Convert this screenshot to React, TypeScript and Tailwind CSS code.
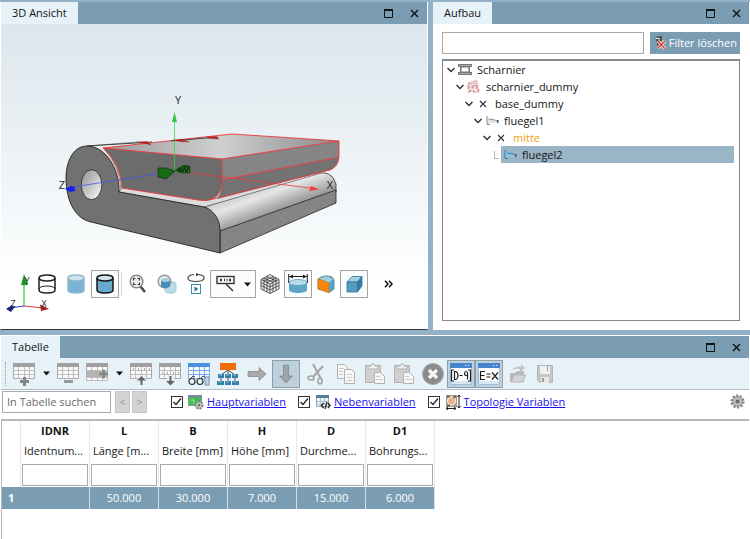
import { useState } from 'react'
import type { ReactNode } from 'react'

type TreeNode = {
    name: string
    icon: ReactNode
    indent: string
    color?: string
    selected?: boolean
}

const columns = [
    { id: 'IDNR', label: 'Identnum...', value: '' },
    { id: 'L', label: 'Länge [m...', value: '50.000' },
    { id: 'B', label: 'Breite [mm]', value: '30.000' },
    { id: 'H', label: 'Höhe [mm]', value: '7.000' },
    { id: 'D', label: 'Durchme...', value: '15.000' },
    { id: 'D1', label: 'Bohrungs...', value: '6.000' },
]

const PanelHeader = ({ title }: { title: string }) => (
    <div className="flex h-[22px] shrink-0 items-stretch bg-[#7b9db3]">
        <h2 className="flex items-center bg-[#e6f1f8] px-[11px]">{title}</h2>
        <div className="ml-auto flex items-center gap-[17px] pr-2">
            <button aria-label="Maximieren">
                <svg width="9" height="9" viewBox="0 0 9 9" fill="none" stroke="#111">
                    <path d="M.5 1v7.5h8V1" />
                    <path d="M0 1h9" strokeWidth="2" />
                </svg>
            </button>
            <button aria-label="Schließen">
                <svg width="9" height="9" viewBox="0 0 9 9" stroke="#111" strokeWidth="1.4">
                    <path d="M1 1l7 7M8 1L1 8" />
                </svg>
            </button>
        </div>
    </div>
)

const Model = () => (
    <svg className="absolute inset-0 h-full w-full" viewBox="1 24 426 305" strokeLinejoin="round">
        <defs>
            <linearGradient id="top" x1="0" y1="0" x2="1" y2="0">
                <stop offset="0" stopColor="#9a9a9a" />
                <stop offset=".5" stopColor="#d0d0d0" />
                <stop offset="1" stopColor="#898989" />
            </linearGradient>
            <linearGradient id="round" x1="250" y1="188" x2="262" y2="220" gradientUnits="userSpaceOnUse">
                <stop offset="0" stopColor="#c9c9c9" />
                <stop offset=".35" stopColor="#e6e6e6" />
                <stop offset="1" stopColor="#8b8b8b" />
            </linearGradient>
            <linearGradient id="hole" x1="0" y1="0" x2="1" y2="1">
                <stop offset="0" stopColor="#8e8e8e" />
                <stop offset="1" stopColor="#fdfdfd" />
            </linearGradient>
            <pattern id="grain" width="8" height="8" patternUnits="userSpaceOnUse">
                <rect width="8" height="8" fill="#858585" />
                <path d="M1 1.500h1M5 5.500h1" stroke="#a98a70" />
                <path d="M5 1.500h1M1 5.500h1" stroke="#757c99" />
            </pattern>
        </defs>
        {/* lower wing */}
        <path d="M204 207L315 174Q332 169 336 184V192L220 232Q217 213 204 207Z" fill="url(#round)" stroke="#333" strokeWidth=".8" />
        <path d="M220 231L336 190V203L220 253Z" fill="url(#grain)" stroke="#222" strokeWidth=".8" />
        <path d="M119 192L122 187 205 199 325 168 318 174 204 207Z" fill="#dcdcdc" stroke="#444" strokeWidth=".5" />
        <path d="M87 146L138 142 145 145 105 150Q119 165 121 189L119 192Z" fill="#ededed" stroke="#555" strokeWidth=".6" />
        <path
            d="M87 146C73 146 66 162 66 178C66 202 76 219 91 222L220 253V229C219 217 212 209 204 207L119 192V187C117 163 103 146 87 146Z"
            fill="#717171"
            stroke="#222"
            strokeWidth=".9"
        />
        <ellipse cx="91.500" cy="184.700" rx="10.300" ry="15" fill="url(#hole)" stroke="#222" strokeWidth=".8" />
        {/* upper wing */}
        <path d="M103 148L232 134 339 141 222 159Z" fill="url(#top)" />
        <path d="M103 148L222 159V184Q220 199 205 201L122 188Q120 163 103 148Z" fill="#6c6c6c" />
        <path d="M222 159L339 141V157L222 180Z" fill="url(#grain)" />
        <path d="M222 180L339 157Q338 167 330 170L217 199Q222 193 222 180Z" fill="#737373" />
        <g fill="none" stroke="#f03434" strokeWidth=".9">
            <path d="M103 148L232 134 339 141V157Q338 167 330 170L209 200Q205 201 198 200L122 188Q120 163 103 148L222 159 339 141" />
            <path d="M222 159V184Q221 197 209 200M222 180L339 157" />
        </g>
        <path d="M87 146L152 142M171 141L218 137" stroke="#333" strokeWidth=".9" />
        <g fill="#d31e1e" stroke="#5c1717" strokeWidth=".3">
            <path d="M137 142L147 141.500 151 145 143 143Z" />
            <path d="M173 140L183 139.500 189 142 180 141.500Z" />
            <path d="M207 137L216 136.500 219 139 210 138.500Z" />
        </g>
        {/* axes */}
        <path d="M175 171L310 188" stroke="#e23b3b" strokeWidth=".8" />
        <path d="M319 189.500L309 191 311 186Z" fill="#f23a3a" />
        <path d="M175 171L73 187" stroke="#4058ef" strokeWidth=".8" />
        <path d="M65 189L71 186 75 187 75 191 70 192Z" fill="#1322f0" />
        <path d="M174.500 171V119" stroke="#3bd04b" strokeWidth="1" strokeDasharray="2 .6" />
        <path d="M174.500 112L177 122H172Z" fill="#36c345" />
        <path d="M158 168H166L175 171 166 179 158 177Z" fill="#176b17" stroke="#122a12" strokeWidth=".7" />
        <path d="M175 170L184 165 190 166V173L180 173Z" fill="#143c14" stroke="#1b701b" strokeWidth=".6" />
        <path d="M182 168h1M186 168h1M184 171h1M188 171h1" stroke="#5abc64" strokeWidth="1" />
        <g fill="#26262b" fontSize="11" textAnchor="middle">
            <text x="178" y="104">Y</text>
            <text x="62" y="189">Z</text>
            <text x="330" y="189">X</text>
        </g>
        {/* orientation triad */}
        <path d="M24 306V284" stroke="#35d138" strokeWidth="1.300" />
        <path d="M24 274L28 285H21Z" fill="#1d9624" />
        <path d="M24 306L43 308" stroke="#e13333" strokeWidth="1" />
        <path d="M49 309L40 304.500 41 311Z" fill="#a31f1f" />
        <path d="M24 306L10 308" stroke="#2e3ef0" strokeWidth="1" />
        <path d="M6 309L12 305 14 308 11 312Z" fill="#1c2474" />
        <g fill="#26262b" fontSize="9" textAnchor="middle">
            <text x="27" y="284">Y</text>
            <text x="13" y="307">Z</text>
            <text x="44" y="307">X</text>
        </g>
    </svg>
)

const Cylinder = ({ fill, stroke, back }: { fill: string; stroke: string; back?: boolean }) => (
    <svg width="20" height="22" viewBox="0 0 20 22" fill={fill} stroke={stroke} strokeWidth="1.500">
        {back && <path d="M2 16c0-4 16-4 16 0" fill="none" strokeWidth="1" />}
        <path d="M2 5v12c0 4 16 4 16 0V5" />
        <ellipse cx="10" cy="5" rx="8" ry="3" fill={back ? 'none' : '#cfe6f1'} />
    </svg>
)

const ViewButton = ({ label, active, wide, children }: { label: string; active?: boolean; wide?: boolean; children: ReactNode }) => (
    <button
        aria-label={label}
        className={`flex h-7 shrink-0 items-center justify-center ${wide ? 'w-[46px] gap-2' : 'w-7'} ${
            active ? 'border border-[#a4a4a4] bg-[#fbfdfd]' : ''
        }`}
    >
        {children}
    </button>
)

const Caret = () => (
    <svg width="7" height="5" viewBox="0 0 7 5">
        <path d="M0 .5h7L3.500 4.500z" fill="#111" />
    </svg>
)

const ViewToolbar = () => (
    <div className="absolute bottom-[31px] left-8 flex items-center">
        <div className="flex gap-px">
            <ViewButton label="Drahtmodell">
                <Cylinder fill="none" stroke="#222" back />
            </ViewButton>
            <ViewButton label="Schattiert">
                <Cylinder fill="#79b2d2" stroke="#91b9ce" />
            </ViewButton>
            <ViewButton label="Schattiert mit Kanten" active>
                <Cylinder fill="#68a9cd" stroke="#151515" />
            </ViewButton>
        </div>
        <div className="mx-[2px] h-6 w-px bg-[#d2d8db]" />
        <div className="flex gap-px">
            <ViewButton label="Alles einpassen">
                <svg width="18" height="20" viewBox="0 0 18 20" fill="none">
                    <path d="M11 12l5 6" stroke="#444" strokeWidth="2.600" />
                    <circle cx="7.500" cy="7.500" r="6.300" fill="#f0f0f0" stroke="#858585" strokeWidth="1.500" />
                    <path d="M4.500 6.500v-2h2M8.500 4.500h2v2M10.500 8.500v2h-2M6.500 10.500h-2v-2" stroke="#333" strokeWidth="1.200" />
                </svg>
            </ViewButton>
            <ViewButton label="Auswahl zoomen">
                <svg width="20" height="20" viewBox="0 0 20 20">
                    <path d="M8 9v8c0 3 11 3 11 0V9q-5-3-11 0" fill="#b9dbea" stroke="#a1cbdc" />
                    <circle cx="7.500" cy="7.500" r="6.300" fill="#eee" stroke="#999" strokeWidth="1.500" />
                    <path d="M4 6v6c2 3 7 3 9 0V6" fill="#438fb9" />
                    <ellipse cx="8.500" cy="6" rx="4.500" ry="2" fill="#a3cbdd" />
                </svg>
            </ViewButton>
            <ViewButton label="Animation">
                <svg width="20" height="22" viewBox="0 0 20 22" fill="none">
                    <path d="M12 1.500c9 .5 8 7-2 7S-1 2.500 8 1.500" stroke="#444" strokeWidth="1.200" />
                    <path d="M10 0l3 1.500-3 2z" fill="#333" />
                    <rect x="5.500" y="11.500" width="9" height="9" fill="#fff" stroke="#438ab0" />
                    <path d="M8.500 13.500v5l4-2.500z" fill="#28739b" />
                </svg>
            </ViewButton>
        </div>
        <ViewButton label="Beschriftung" active wide>
            <svg width="20" height="18" viewBox="0 0 20 18" fill="none" stroke="#333">
                <rect x="1" y="1.500" width="17" height="7" strokeWidth="1.400" fill="#fff" />
                <path d="M4 5h2M8 5h1M10.500 5h1M13 5h2" strokeWidth="2.600" />
                <path d="M10 9l7 7" strokeWidth="1.400" />
            </svg>
            <Caret />
        </ViewButton>
        <ViewButton label="Gitter">
            <svg width="20" height="20" viewBox="0 0 20 20" stroke="#333" strokeWidth=".8" fill="#f3f3f3">
                <path d="M1 5.500l9-5 9 5v9.500l-9 4.500L1 15z" />
                <path
                    d="M1 5.500l9 4.500 9-4.500M10 10v9.500M4 4v12.500M7 2.500V18M13 2.500V18M16 4v12.500M1 8.500l9 4.500 9-4.500M1 11.500l9 4.500 9-4.500M4 4l9 4.500M7 2.500L16 7M13 2.500L4 7M16 4L7 8.500"
                    fill="none"
                />
            </svg>
        </ViewButton>
        <ViewButton label="Bemaßung" active>
            <svg width="20" height="20" viewBox="0 0 20 20">
                <path d="M1 8v8c0 4 18 4 18 0V8" fill="#5fa5c9" />
                <ellipse cx="10" cy="8.500" rx="9" ry="3" fill="#b8dcec" stroke="#569abd" strokeWidth=".8" />
                <path d="M.7 0v9M19.300 0v9M1 2.500h18" stroke="#222" fill="none" />
                <path d="M1 2.500L5 .5v4zM19 2.500L15 .5v4z" fill="#222" />
            </svg>
        </ViewButton>
        <ViewButton label="Schnitt">
            <svg width="18" height="19" viewBox="0 0 18 19">
                <path d="M1 4Q7-1 15 2l2 3v9l-4 3L1 14z" fill="#5fa3c5" stroke="#447d9b" strokeWidth=".8" />
                <path d="M2 4Q9-1 16 4l-4 4z" fill="#a2ceda" />
                <path d="M1 3.500l11 4.500v10L1 14z" fill="#fb8508" stroke="#a9792f" strokeWidth=".6" />
            </svg>
        </ViewButton>
        <ViewButton label="Perspektive" active>
            <svg width="17" height="18" viewBox="0 0 17 18" stroke="#31739a" strokeWidth=".8">
                <path d="M1 7l5-5.500h10L11.500 7z" fill="#a4cee0" />
                <path d="M1 7h10.500v10H1z" fill="#569bc1" />
                <path d="M11.500 7L16 1.500V11l-4.500 6z" fill="#347ba8" />
            </svg>
        </ViewButton>
        <button aria-label="Weitere" className="ml-4">
            <svg width="9" height="8" viewBox="0 0 9 8" fill="none" stroke="#111" strokeWidth="1.500">
                <path d="M1 .7L4 4 1 7.300M5 .7L8 4 5 7.300" />
            </svg>
        </button>
    </div>
)

const CrossIcon = () => (
    <svg width="14" height="14" viewBox="0 0 14 14" stroke="#333" strokeWidth="1.100">
        <path d="M4 4l6 6M10 4l-6 6" />
    </svg>
)

const WingIcon = ({ blue }: { blue?: boolean }) => (
    <svg width="14" height="14" viewBox="0 0 14 14">
        <path d="M1 3l3 1v1l8 1.500v2L4 9l1 1.500H2V5z" fill={blue ? '#8dc5e4' : '#e2e5e6'} />
        <path d="M1 3h2M2 4v6M2 10.500h3M4 5l8 1.500" stroke={blue ? '#2c80ad' : '#8c8c8c'} fill="none" />
        <path d="M12 6h1.500v3H12z" fill="#4c535a" />
    </svg>
)

const AssemblyIcon = () => (
    <svg width="14" height="14" viewBox="0 0 14 14" fill="#777">
        <path d="M0 1h14v3h-2v5h2v3H0V9h2V4H0z" />
        <path d="M3.500 4.500h7v4h-7z" fill="#fff" />
        <path d="M1 2.500h12M1 10.500h12" stroke="#aaa" />
    </svg>
)

const NoPartIcon = () => (
    <svg width="14" height="14" viewBox="0 0 14 14" fill="none" stroke="#d98484" strokeWidth=".9">
        <path d="M2 5V2l3 3V1M7 1h3v3H7zM1 9V6h2v2H1M5 9V6h2v1H5l2 2M9 6h3M9 6v3h3M9 7.500h2M2 13v-3h2v1H2M6 13l1-3 1 3M10 10h3M11.500 10v3" />
        <path d="M1 13l5-3M8 12l4-1M5 6l6-1M0 7l3-5" stroke="#c0a8a8" />
    </svg>
)

const nodes: TreeNode[] = [
    { name: 'Scharnier', icon: <AssemblyIcon />, indent: 'pl-[3px]' },
    { name: 'scharnier_dummy', icon: <NoPartIcon />, indent: 'pl-[12px]' },
    { name: 'base_dummy', icon: <CrossIcon />, indent: 'pl-[21px]' },
    { name: 'fluegel1', icon: <WingIcon />, indent: 'pl-[30px]' },
    { name: 'mitte', icon: <CrossIcon />, indent: 'pl-[39px]', color: 'text-[#f2a20d]' },
    { name: 'fluegel2', icon: <WingIcon blue />, indent: 'pl-[48px]', selected: true },
]

const Tree = () => (
    <ul className="mx-[9px] mt-[5px] mb-[9px] flex-1 border border-t-2 border-[#85898d] pr-[5px]">
        {nodes.map((node) => (
            <li key={node.name} className={`flex h-[17px] items-center ${node.indent}`}>
                <span className="flex w-[10px] shrink-0 justify-center">
                    {node.selected ? (
                        <svg width="5" height="8" viewBox="0 0 5 8" fill="none" stroke="#b5b5b5">
                            <path d="M.5 0v7.500H5" />
                        </svg>
                    ) : (
                        <svg width="8" height="6" viewBox="0 0 8 6" fill="none" stroke="#333" strokeWidth="1.500">
                            <path d="M.5 1L4 4.500 7.500 1" />
                        </svg>
                    )}
                </span>
                <span
                    className={`flex h-full items-center gap-[5px] pl-[2px] ${node.selected ? 'flex-1 bg-[#9ab5c6]' : ''} ${node.color ?? ''}`}
                >
                    {node.icon}
                    {node.name}
                </span>
            </li>
        ))}
    </ul>
)

const Grid = ({ children, blue }: { children?: ReactNode; blue?: boolean }) => (
    <svg width="22" height="24" viewBox="0 0 22 24">
        <path d="M.5 2.500h21v14H.5z" fill="#fafafa" stroke={blue ? '#83abd8' : '#a9a9a9'} />
        <path d="M0 1h22v4H0z" fill={blue ? '#4a91e6' : '#a0a0a0'} />
        <path d="M1 8.500h20M1 12.500h20M5.500 5v12M11.500 5v12M16.500 5v12" stroke={blue ? '#75aaf0' : '#bdbdbd'} />
        {children}
    </svg>
)

const Tool = ({ label, active, children }: { label: string; active?: boolean; children: ReactNode }) => (
    <button
        aria-label={label}
        className={`flex h-7 w-7 shrink-0 items-center justify-center ${active ? 'border border-[#8f9fa8] bg-[#bdd1dd]' : ''}`}
    >
        {children}
    </button>
)

const DropTool = ({ label }: { label: string }) => (
    <button aria-label={label} className="flex h-7 w-[14px] items-center justify-center">
        <Caret />
    </button>
)

const Clipboard = () => (
    <svg width="22" height="24" viewBox="0 0 22 24" stroke="#b2b2b2">
        <path d="M1.500 3.500h15v17h-15z" fill="#d0d0d0" />
        <path d="M4 7h10V4h-3Q9-1 7 4H4z" fill="#eee" />
        <path d="M10.500 10.500h6l4 4v7h-10z" fill="#f7f7f7" />
        <path d="M12 14.500h4M12 17.500h7" stroke="#ccc" />
    </svg>
)

const WindowBox = ({ children }: { children: ReactNode }) => (
    <svg width="22" height="24" viewBox="0 0 22 24" fill="none">
        <path d="M.5 1.500h21v21H.5z" fill="#fff" stroke="#a3bcdc" />
        <path d="M0 1h22v5H0z" fill="#4784ce" />
        <path d="M15 3.500h1M18 3.500h1" stroke="#fff" />
        <path d="M1 19h20v3H1z" fill="#d5e6f5" />
        <g stroke="#1d1d1d" strokeWidth="1.200">
            {children}
        </g>
    </svg>
)

const TableToolbar = () => (
    <div className="flex h-8 shrink-0 items-center border-b border-[#adbcc7] bg-[#e6f1f8] pl-1">
        <div className="mr-1 h-6 w-px border-l border-dotted border-[#8d9ba4]" />
        <div className="flex gap-px">
            <Tool label="Zeile einfügen">
                <Grid>
                    <path d="M11.500 15v9M7 19.500h9" stroke="#858585" strokeWidth="3" />
                </Grid>
            </Tool>
            <DropTool label="Einfügeoptionen" />
            <Tool label="Zeile löschen">
                <Grid>
                    <path d="M7 19.500h9" stroke="#999" strokeWidth="3" />
                </Grid>
            </Tool>
            <Tool label="Zeile duplizieren">
                <Grid>
                    <path d="M0 9h22v6H0z" fill="#b3b3b3" />
                    <path d="M.5 15.500h21v3H.5z" fill="#fafafa" stroke="#bbb" />
                    <path d="M5.500 15v4M11.500 15v4M16.500 15v4" stroke="#bbb" />
                    <path d="M17.500 7.500v9M13 12h9" stroke="#858585" strokeWidth="2.500" />
                </Grid>
            </Tool>
            <DropTool label="Duplizieroptionen" />
            <Tool label="Zeile nach oben">
                <Grid>
                    <path d="M8 13h7v11H8z" fill="#e6f1f8" />
                    <path d="M3 7h1M8 7h1M14 7h1M19 7h1" stroke="#555" />
                    <path d="M11.500 23v-5" stroke="#666" strokeWidth="2" />
                    <path d="M7 18.500L11.500 14l4.500 4.500z" fill="#666" />
                </Grid>
            </Tool>
            <Tool label="Zeile nach unten">
                <Grid>
                    <path d="M8 13h7v11H8z" fill="#e6f1f8" />
                    <path d="M3 11h1M8 11h1M14 11h1M19 11h1" stroke="#555" />
                    <path d="M11.500 14v6" stroke="#666" strokeWidth="2" />
                    <path d="M7 19h9l-4.500 4.500z" fill="#666" />
                </Grid>
            </Tool>
            <Tool label="Tabelle anzeigen">
                <Grid blue>
                    <path d="M1 18l4-4 2 1M11 18l4-4 2 1" fill="none" stroke="#444" />
                    <circle cx="4" cy="19.500" r="3" fill="#e6f1f8" stroke="#333" strokeWidth="1.200" />
                    <circle cx="12" cy="19.500" r="3" fill="#e6f1f8" stroke="#333" strokeWidth="1.200" />
                    <path d="M17 15h4v8h-4z" fill="#c3d5e9" stroke="#7291b5" />
                </Grid>
            </Tool>
            <Tool label="Struktur">
                <svg width="22" height="24" viewBox="0 0 22 24">
                    <path d="M11 8v4M11 8l-7 5M11 8l7 5M4 14v6M11 12v8M18 14v6" stroke="#555" fill="none" />
                    <path d="M3 1h16v7H3z" fill="#f36c0a" />
                    <path d="M1 12h6v4H1zM8 12h6v4H8zM15 12h6v4h-6zM0 19h7v4H0zM8 19h6v4H8zM15 19h7v4h-7z" fill="#347fa8" />
                    <path d="M2 13h3M9 13h3M16 13h3M1 20h4M9 20h3M16 20h4" stroke="#88bed7" />
                </svg>
            </Tool>
            <Tool label="Nach rechts">
                <svg width="20" height="14" viewBox="0 0 20 14">
                    <path d="M1 4.500h11v-4l7 6.500-7 6.500v-4H1z" fill="#aaa" stroke="#8b8b8b" strokeWidth=".8" />
                </svg>
            </Tool>
            <Tool label="Nach unten" active>
                <svg width="14" height="20" viewBox="0 0 14 20">
                    <path d="M4.500 1h5v11h4L7 19 .5 12h4z" fill="#9ba4a9" stroke="#83898d" strokeWidth=".8" />
                </svg>
            </Tool>
        </div>
        <div className="ml-[3px] flex gap-px">
            <Tool label="Ausschneiden">
                <svg width="20" height="22" viewBox="0 0 20 22" fill="none" stroke="#a5a5a5" strokeWidth="1.700">
                    <path d="M6 1l8 15M16 3L6 14" strokeWidth="2" />
                    <ellipse cx="4" cy="15" rx="3" ry="2" />
                    <ellipse cx="13" cy="18" rx="2" ry="3" />
                </svg>
            </Tool>
            <Tool label="Kopieren">
                <svg width="20" height="22" viewBox="0 0 20 22" fill="#f7f7f7" stroke="#b0b0b0">
                    <path d="M1.500 1.500h7l3 3v11h-10z" />
                    <path d="M8.500 6.500h7l3 3v11h-10z" />
                    <path d="M3 5.500h5M3 8.500h4M3 11.500h4M10.500 11.500h6M10.500 14.500h6M10.500 17.500h6" stroke="#ccc" />
                </svg>
            </Tool>
            <Tool label="Einfügen">
                <Clipboard />
            </Tool>
            <Tool label="Anhängen">
                <Clipboard />
            </Tool>
            <Tool label="Entfernen">
                <svg width="22" height="22" viewBox="0 0 22 22">
                    <circle cx="11" cy="11" r="10.500" fill="#8b8b8b" stroke="#aaa" />
                    <path d="M7 7l8 8M15 7l-8 8" stroke="#f7f7f7" strokeWidth="3.200" />
                </svg>
            </Tool>
        </div>
        <Tool label="Wertebereich" active>
            <WindowBox>
                <path d="M4 8H1.500v11H4M18 8h2.500v11H18M4.500 9.500v8H6q2-1 2-4t-2-4zM9.500 13.500h3M17.500 17.500v-6q0-2-1.500-2t-1.500 2 1.500 2h1.500" />
            </WindowBox>
        </Tool>
        <Tool label="Formeln" active>
            <WindowBox>
                <path d="M7 9.500H2.500v8H7M2.500 13.500h4M8.500 12h4M8.500 15h4M14 10.500l6 7M20 10.500l-6 7" />
            </WindowBox>
        </Tool>
        <Tool label="Öffnen">
            <svg width="18" height="20" viewBox="0 0 18 20">
                <path d="M2 9h5l2-2h7v11H2z" fill="#bababa" />
                <path d="M3 18l3-7h12l-4 7z" fill="#d4d4d4" stroke="#b7b7b7" />
                <path d="M4 6q4-5 9-3V0l4 4-5 4V5Q8 4 4 6z" fill="#c1c1c1" />
            </svg>
        </Tool>
        <Tool label="Speichern">
            <svg width="16" height="20" viewBox="0 0 16 20">
                <path d="M.5 1.500h15v17h-13l-2-2z" fill="#c3c7c9" stroke="#b1b6b9" />
                <path d="M3 2h10v8H3z" fill="#eef1f2" />
                <path d="M4 13h8v6H4z" fill="#e8e8e8" />
                <path d="M5 14h2v4H5zM10 2h1v5h-1z" fill="#999" />
            </svg>
        </Tool>
    </div>
)

const VariableToggle = ({ id, label, children }: { id: string; label: string; children: ReactNode }) => (
    <div className="flex items-center">
        <input
            id={id}
            type="checkbox"
            defaultChecked
            aria-label={label}
            className="peer h-3 w-3 appearance-none border border-[#333] bg-white"
        />
        <svg
            className="pointer-events-none -ml-3 hidden peer-checked:block"
            width="12"
            height="12"
            viewBox="0 0 12 12"
            fill="none"
            stroke="#222"
            strokeWidth="1.300"
        >
            <path d="M2.500 6l2.500 2.500 5-6" />
        </svg>
        <label htmlFor={id} className="mr-[3px] ml-[5px]">
            {children}
        </label>
        <a href="#" className="text-[#1712ee] underline">
            {label}
        </a>
    </div>
)

const SearchRow = () => {
    const [search, setSearch] = useState<string>('')
    return (
        <div className="flex h-[29px] shrink-0 items-center bg-white pr-1 pb-[6px] pl-px">
            <input
                aria-label="In Tabelle suchen"
                placeholder="In Tabelle suchen"
                value={search}
                onChange={(e) => setSearch(e.target.value)}
                className="h-[22px] w-[109px] border border-[#a9a9a9] px-1 placeholder:text-[#6b6b6b]"
            />
            <button aria-label="Vorheriger Treffer" className="ml-1 h-[22px] w-[15px] border border-[#c5c5c5] bg-[#d4d4d4] text-[#949494]">
                &lt;
            </button>
            <button aria-label="Nächster Treffer" className="ml-[2px] h-[22px] w-[15px] border border-[#c5c5c5] bg-[#d4d4d4] text-[#949494]">
                &gt;
            </button>
            <div className="ml-6 flex gap-3">
                <VariableToggle id="main" label="Hauptvariablen">
                    <svg width="16" height="16" viewBox="0 0 16 16">
                        <path d="M.5 1.500h13v10H.5z" fill="#3fc24a" stroke="#8a9499" />
                        <path d="M0 1h14v3H0z" fill="#788c98" />
                        <path d="M3 6h3v4" stroke="#a5eaa7" fill="none" />
                        <circle cx="11" cy="11" r="3.500" fill="#ddd" stroke="#777" strokeWidth="2" strokeDasharray="2 1" />
                        <circle cx="11" cy="11" r="1.500" fill="#777" />
                    </svg>
                </VariableToggle>
                <VariableToggle id="side" label="Nebenvariablen">
                    <svg width="16" height="16" viewBox="0 0 16 16" fill="none">
                        <path d="M1.500 1.500h12v11h-12z" fill="#eef4f8" stroke="#91a6b3" />
                        <path d="M1 1h13v3H1z" fill="#5a7e99" />
                        <path d="M2 7.500h11M2 10.500h9M5.500 4v8M9.500 4v7" stroke="#a9bfcd" />
                        <path d="M8.500 9L6.500 11.500l2 2.500M13 9l2 2.500-2 2.500M12 8l-2 7" stroke="#222" strokeWidth="1.300" />
                    </svg>
                </VariableToggle>
                <VariableToggle id="topology" label="Topologie Variablen">
                    <svg width="16" height="16" viewBox="0 0 16 16" fill="none">
                        <path d="M1 1h11v12H1z" fill="#a69889" />
                        <circle cx="6.500" cy="7" r="4" fill="#eab487" stroke="#f5e5d3" strokeWidth="1.300" />
                        <path d="M2 2l3 1M2 12l3-1M11 2L8 4" stroke="#514e4b" strokeWidth="1.200" />
                        <path d="M14 1v13M12.500 3L14 1l1.500 2M12.500 12l1.500 2 1.500-2M1 14.500h10M3 13l-2 1.500L3 16M9 13l2 1.500L9 16" stroke="#222" />
                    </svg>
                </VariableToggle>
            </div>
            <button aria-label="Einstellungen" className="ml-auto">
                <svg width="15" height="15" viewBox="0 0 15 15" fill="none">
                    <circle cx="7.500" cy="7.500" r="5.600" stroke="#858585" strokeWidth="3" strokeDasharray="2 1.500" />
                    <circle cx="7.500" cy="7.500" r="4.800" fill="#c1bebc" stroke="#888" />
                    <circle cx="7.500" cy="7.500" r="2" fill="#6f6b69" />
                </svg>
            </button>
        </div>
    )
}

const DataTable = () => (
    <div className="flex-1 border-t-2 border-l border-[#b7b7b7] bg-white">
        <table className="w-[433px] table-fixed border-separate border-spacing-0 text-left">
            <colgroup>
                <col className="w-[19px]" />
                {columns.map((col) => (
                    <col key={col.id} className="w-[69px]" />
                ))}
            </colgroup>
            <thead>
                <tr className="h-[20px]">
                    <th className="border-r border-[#e8e8e8]" />
                    {columns.map((col) => (
                        <th key={col.id} className="border-r border-[#e8e8e8] p-0 text-center font-bold">
                            {col.id}
                        </th>
                    ))}
                </tr>
                <tr className="h-[20px]">
                    <th className="border-r border-[#e8e8e8]" />
                    {columns.map((col) => (
                        <th key={col.id} className="overflow-hidden border-r border-[#e8e8e8] p-0 pl-[3px] font-normal whitespace-nowrap">
                            {col.label}
                        </th>
                    ))}
                </tr>
                <tr className="h-[26px]">
                    <th className="border-r border-[#e8e8e8]" />
                    {columns.map((col) => (
                        <th key={col.id} className="border-r border-[#e8e8e8] p-px pt-[3px]">
                            <input aria-label={`Filter ${col.id}`} className="block h-[22px] w-full border border-[#a9a9a9] px-1 font-normal" />
                        </th>
                    ))}
                </tr>
            </thead>
            <tbody>
                <tr className="h-[22px] bg-[#7b9db3] text-white">
                    <th className="p-0 pl-[6px] font-bold">1</th>
                    {columns.map((col) => (
                        <td key={col.id} className="border-r border-[#d3dde3] p-0 text-center">
                            {col.value}
                        </td>
                    ))}
                </tr>
            </tbody>
        </table>
    </div>
)

const App = () => {
    const [filter, setFilter] = useState<string>('')
    return (
        <div className="flex h-screen flex-col bg-[#93b2c7] font-['Open_Sans','Noto_Sans',sans-serif] text-[11px] leading-4 text-[#151515]">
            <div className="flex min-h-0 flex-1 gap-[5px] pt-[2px] pb-[5px]">
                <section className="flex min-w-0 flex-1 flex-col border-x border-b border-x-white border-b-[#333]">
                    <PanelHeader title="3D Ansicht" />
                    <div className="relative flex-1 bg-linear-to-b from-[#dde6ed] via-[#edf3f6] via-45% to-white to-85%">
                        <Model />
                        <ViewToolbar />
                    </div>
                </section>
                <section className="flex w-[317px] shrink-0 flex-col border-r border-white bg-white">
                    <PanelHeader title="Aufbau" />
                    <div className="mt-2 flex gap-[6px] px-[9px]">
                        <input
                            aria-label="Filter"
                            value={filter}
                            onChange={(e) => setFilter(e.target.value)}
                            className="h-[22px] min-w-0 flex-1 border border-[#a9a9a9] px-1"
                        />
                        <button
                            onClick={() => setFilter('')}
                            className="flex h-[22px] items-center gap-[2px] bg-[#7b9db3] px-[3px] text-white"
                        >
                            <svg width="14" height="14" viewBox="0 0 14 14" fill="none">
                                <path d="M1 1l8-1v4L6 7v5L4 10V6z" fill="#4c5054" />
                                <path d="M2 2l5 1" stroke="#fff" />
                                <path d="M5 5l7 8M12 5l-7 7" stroke="#fff" strokeWidth="3" />
                                <path d="M5 5l7 8M12 5l-7 7" stroke="#dd4730" strokeWidth="1.700" />
                            </svg>
                            Filter löschen
                        </button>
                    </div>
                    <Tree />
                </section>
            </div>
            <section className="flex h-[204px] shrink-0 flex-col border border-b-0 border-white">
                <PanelHeader title="Tabelle" />
                <TableToolbar />
                <SearchRow />
                <DataTable />
            </section>
        </div>
    )
}

export default App
